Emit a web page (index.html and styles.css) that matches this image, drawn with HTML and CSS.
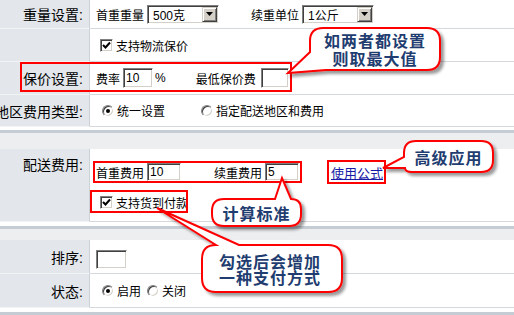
FILE: index.html
```html
<!doctype html>
<html lang="zh-CN">

<head>
	<meta charset="UTF-8">
	<title>配送方式设置</title>
	<link rel="stylesheet" href="styles.css">
</head>

<body>
	<div class="page">
		<div class="form">
			<div class="lbl">重量设置:</div>
			<div class="val">
				<span class="txt-label">首重重量</span>
				<span class="select"><span class="select-val">500克</span><span class="select-btn"></span></span>
				<span class="txt-label gap-l">续重单位</span>
				<span class="select"><span class="select-val">1公斤</span><span class="select-btn"></span></span>
			</div>

			<div class="lbl"></div>
			<div class="val">
				<span class="cb"><svg width="9" height="9" viewBox="0 0 9 9"><path d="M1 4 L3.5 6.5 L8 1.5" fill="none" stroke="#000" stroke-width="2"/></svg></span>
				<span>支持物流保价</span>
			</div>

			<div class="lbl">保价设置:</div>
			<div class="val">
				<span class="txt-label">费率</span>
				<input class="txt w-rate" type="text" value="10">
				<span class="pct">%</span>
				<span class="txt-label min-fee">最低保价费</span>
				<input class="txt w-min" type="text" value="">
			</div>

			<div class="lbl">地区费用类型:</div>
			<div class="val">
				<span class="radio on"></span><span>统一设置</span>
				<span class="radio opt2"></span><span>指定配送地区和费用</span>
			</div>

			<div class="spacer"></div>

			<div class="lbl lbl-top">配送费用:</div>
			<div class="val val-stack">
				<div class="line">
					<span class="txt-label">首重费用</span>
					<input class="txt w-fee" type="text" value="10">
					<span class="txt-label next-fee">续重费用</span>
					<input class="txt w-fee" type="text" value="5">
					<a class="formula" href="#">使用公式</a>
				</div>
				<div class="line line-cod">
					<span class="cb"><svg width="9" height="9" viewBox="0 0 9 9"><path d="M1 4 L3.5 6.5 L8 1.5" fill="none" stroke="#000" stroke-width="2"/></svg></span>
					<span>支持货到付款</span>
				</div>
			</div>

			<div class="spacer spacer-sm"></div>

			<div class="lbl">排序:</div>
			<div class="val">
				<input class="txt w-sort" type="text" value="">
			</div>

			<div class="lbl">状态:</div>
			<div class="val">
				<span class="radio on"></span><span>启用</span>
				<span class="radio opt-off"></span><span>关闭</span>
			</div>

			<div class="spacer spacer-end"></div>
		</div>

		<!-- annotations -->
		<svg class="marks" width="514" height="315" viewBox="0 0 514 315">
			<defs>
				<filter id="sh" x="-30%" y="-30%" width="160%" height="160%">
					<feDropShadow dx="3" dy="3" stdDeviation="1.5" flood-color="#000" flood-opacity=".4" />
				</filter>
			</defs>
			<g fill="none" stroke="#f00" stroke-width="2">
				<rect x="21" y="63" width="270" height="28" />
				<rect x="94" y="162" width="207" height="20" />
				<rect x="328" y="161" width="57" height="22" />
				<rect x="91" y="191" width="96" height="21" />
			</g>
			<g fill="#fff" stroke="#f00" stroke-width="2" filter="url(#sh)">
				<path d="M323 28 H427 Q440 28 440 41 V57 Q440 70 427 70 H326 L288 73 L310 52 V41 Q310 28 323 28 Z" />
				<path d="M416 141 H481 Q493 141 493 153 V160 Q493 172 481 172 H412 Q405 172 405 168 L383 168 L404 157 V153 Q404 141 416 141 Z" />
				<path d="M224 199 H275 L282 178 L291 199 Q301 199 301 209 V214 Q301 226 289 226 H224 Q212 226 212 214 V211 Q212 199 224 199 Z" />
				<path d="M216 245 L157 208 L239 245 H328 Q342 245 342 259 V278 Q342 292 328 292 H216 Q202 292 202 278 V259 Q202 245 216 245 Z" />
			</g>
		</svg>

		<div class="callout c-both">如两者都设置<br>则取最大值</div>
		<div class="callout c-adv">高级应用</div>
		<div class="callout c-calc">计算标准</div>
		<div class="callout c-cod">勾选后会增加<br>一种支付方式</div>
	</div>
</body>

</html>
```

FILE: styles.css
```css
body {
	margin: 0;
	font: 12px "Liberation Sans", "Noto Sans CJK SC", sans-serif;
	color: #000;
	background: #fff;
}

.page {
	position: relative;
	width: 514px;
	height: 315px;
	overflow: hidden;
}

.form {
	display: grid;
	grid-template-columns: 90px 1fr;
	grid-template-rows: 29px 33px 33px 32px 22px 73px 18px 34px 34px 8px;
}

.lbl {
	box-sizing: border-box;
	display: flex;
	justify-content: flex-end;
	align-items: center;
	padding-right: 6px;
	white-space: nowrap;
	font-size: 14px;
	background: #e3e7eb;
	border-right: 1px solid #ccd1d6;
	border-bottom: 1px solid #f1f3f5;
}

.lbl-top {
	align-items: flex-start;
	padding-top: 5px;
}

.val {
	box-sizing: border-box;
	display: flex;
	align-items: center;
	padding-left: 6px;
	white-space: nowrap;
	border-bottom: 1px solid #d5d9dd;
}

.val-stack {
	flex-direction: column;
	align-items: flex-start;
	padding-top: 13px;
}

.line {
	display: flex;
	align-items: center;
	height: 20px;
}

.line-cod {
	margin-top: 10px;
}

.spacer {
	grid-column: 1 / 3;
	background: linear-gradient(#fff 0 3px, #c5ccd3 3px 6px, #eceef0 6px);
}

.spacer-sm {
	background: linear-gradient(#fff 0 4px, #c5ccd3 4px 7px, #eceef0 7px);
}

.spacer-end {
	background: linear-gradient(#fff 0 4px, #c5ccd3 4px 7px, #fff 7px);
}

.txt-label {
	margin-right: 3px;
}

.gap-l {
	margin-left: 32px;
}

/* classic windows controls */
.select {
	box-sizing: border-box;
	display: inline-flex;
	align-items: center;
	width: 72px;
	height: 19px;
	padding: 1px;
	background: #fff;
	border: 1px solid;
	border-color: #808080 #fff #fff #808080;
	box-shadow: inset 1px 1px #404040, inset -1px -1px #d4d0c8;
}

.select-val {
	flex: 1;
	padding-left: 4px;
}

.select-btn {
	box-sizing: border-box;
	display: flex;
	align-items: center;
	justify-content: center;
	width: 15px;
	height: 15px;
	background: #d4d0c8;
	border: 1px solid;
	border-color: #d4d0c8 #404040 #404040 #d4d0c8;
	box-shadow: inset 1px 1px #fff, inset -1px -1px #808080;
}

.select-btn::after {
	content: "";
	width: 7px;
	height: 4px;
	background: #000;
	clip-path: polygon(0 0, 100% 0, 50% 100%);
}

.txt {
	box-sizing: border-box;
	height: 20px;
	margin: 0;
	padding: 0 2px;
	font: 12px "Liberation Sans", sans-serif;
	background: #fff;
	border: 1px solid;
	border-color: #808080 #fff #fff #808080;
	box-shadow: inset 1px 1px #404040, inset -1px -1px #d4d0c8;
	outline: none;
}

.w-rate {
	width: 30px;
}

.pct {
	margin-left: 2px;
}

.min-fee {
	margin-left: 30px;
	margin-right: 5px;
}

.w-min {
	width: 28px;
}

.w-fee {
	width: 34px;
	height: 18px;
}

.next-fee {
	margin-left: 33px;
}

.w-sort {
	width: 31px;
	height: 19px;
	margin-top: 6px;
}

.cb {
	box-sizing: border-box;
	display: inline-flex;
	align-items: center;
	justify-content: center;
	width: 13px;
	height: 13px;
	margin: 0 3px 0 4px;
	background: #fff;
	border: 1px solid;
	border-color: #808080 #fff #fff #808080;
	box-shadow: inset 1px 1px #404040, inset -1px -1px #d4d0c8;
}

.radio {
	box-sizing: border-box;
	position: relative;
	display: inline-block;
	width: 12px;
	height: 12px;
	margin: 0 3px 0 6px;
	border-radius: 50%;
	background: #fff;
	border: 1px solid;
	border-color: #808080 #fff #fff #808080;
	box-shadow: inset 1px 1px #404040, inset -1px -1px #d4d0c8;
}

.radio.on::after {
	content: "";
	position: absolute;
	left: 3px;
	top: 3px;
	width: 4px;
	height: 4px;
	border-radius: 50%;
	background: #000;
}

.opt2 {
	margin-left: 36px;
}

.opt-off {
	margin-left: 6px;
}

.formula {
	margin-left: 32px;
	font-size: 13px;
	color: #1a1aa6;
}

/* annotation layer */
.marks {
	position: absolute;
	left: 0;
	top: 0;
	pointer-events: none;
}

.callout {
	position: absolute;
	display: flex;
	align-items: center;
	justify-content: center;
	text-align: center;
	font: bold 16px "Noto Sans CJK SC", sans-serif;
	letter-spacing: 1px;
	line-height: 18px;
	color: #1f3d70;
}

.c-both {
	left: 310px;
	top: 28px;
	width: 130px;
	height: 42px;
}

.c-adv {
	left: 404px;
	top: 141px;
	width: 89px;
	height: 31px;
}

.c-calc {
	left: 212px;
	top: 199px;
	width: 89px;
	height: 27px;
}

.c-cod {
	left: 202px;
	top: 245px;
	width: 136px;
	height: 47px;
	line-height: 16px;
}
```
